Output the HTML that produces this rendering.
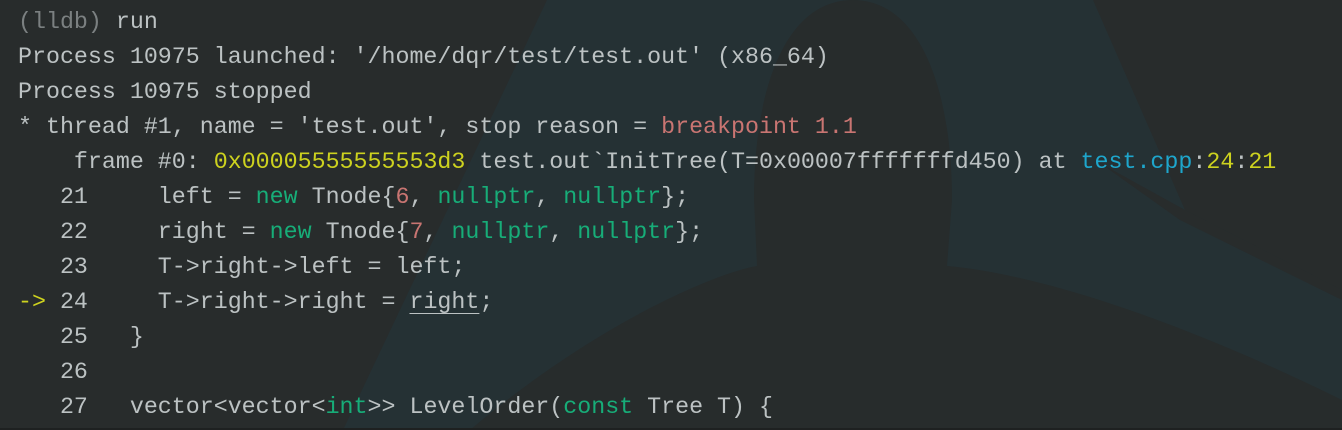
<!DOCTYPE html>
<html><head><meta charset="utf-8"><style>
html,body{margin:0;padding:0;width:1342px;height:430px;overflow:hidden;background:#282c2c}
svg.bg{position:absolute;left:0;top:0}
pre{position:absolute;left:18px;top:5px;margin:0;font-family:"Liberation Mono",monospace;font-size:23.3px;line-height:35px;color:#bcc2c3;white-space:pre}
.g{color:#7b8081}.r{color:#c97572}.y{color:#cdd21f}.c{color:#1ea6cc}.k{color:#17ad78}
.u{text-decoration:underline;text-underline-offset:5px;text-decoration-thickness:1px}
</style></head><body>
<svg class="bg" width="1342" height="430" viewBox="0 0 1342 430">
<polygon points="547,0 1093,0 1185,210 1342,290 1342,430 343,430" fill="#253134"/>
<path d="M1100,163 L1185,210 L1342,290 L1342,300 L1180,220 Z" fill="#282c2c"/>
<path d="M853,0 C785,0 754,90 754,200 L757,266 C720,272 600,320 470,430 L1342,430 L1342,400 C1200,330 1050,275 947,266 L952,200 C952,90 920,0 853,0 Z" fill="#272c2c"/>
<rect x="0" y="428" width="1342" height="2" fill="#1e2121"/>
</svg>
<pre><span class="g">(lldb)</span> run
Process 10975 launched: '/home/dqr/test/test.out' (x86_64)
Process 10975 stopped
* thread #1, name = 'test.out', stop reason = <span class="r">breakpoint 1.1</span>
    frame #0: <span class="y">0x00005555555553d3</span> test.out`InitTree(T=0x00007fffffffd450) at <span class="c">test.cpp</span>:<span class="y">24</span>:<span class="y">21</span>
   21     left = <span class="k">new</span> Tnode{<span class="r">6</span>, <span class="k">nullptr</span>, <span class="k">nullptr</span>};
   22     right = <span class="k">new</span> Tnode{<span class="r">7</span>, <span class="k">nullptr</span>, <span class="k">nullptr</span>};
   23     T-&gt;right-&gt;left = left;
<span class="y">-&gt;</span> 24     T-&gt;right-&gt;right = <span class="u">right</span>;
   25   }
   26
   27   vector&lt;vector&lt;<span class="k">int</span>&gt;&gt; LevelOrder(<span class="k">const</span> Tree T) {</pre>
</body></html>
